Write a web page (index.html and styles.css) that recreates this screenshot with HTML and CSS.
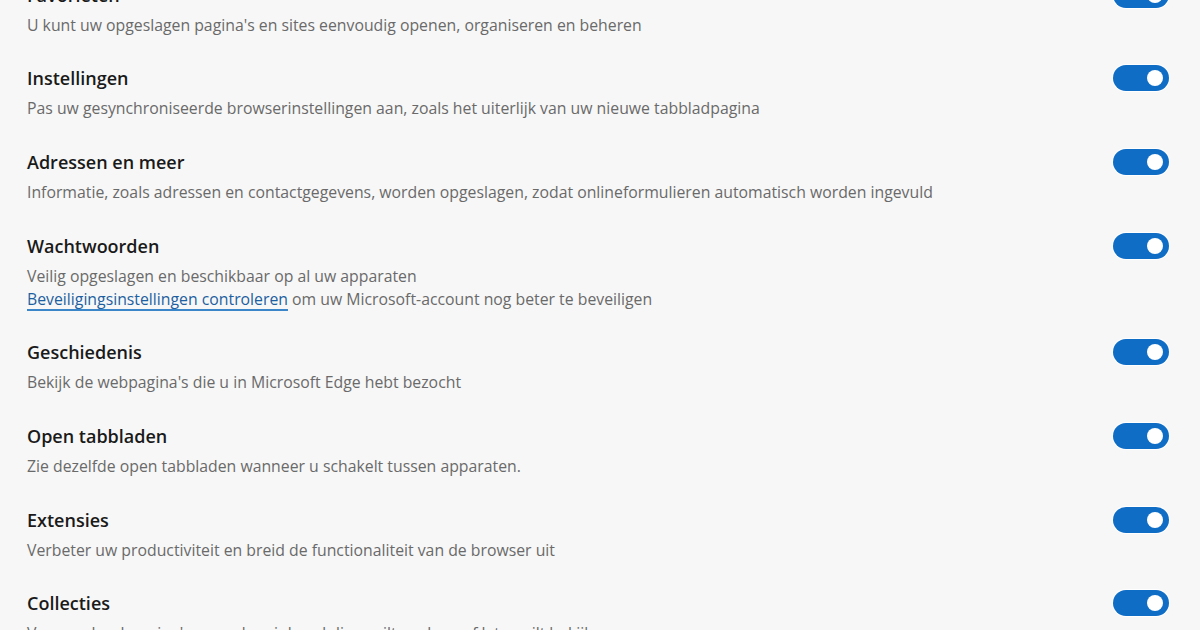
FILE: index.html
```html
<!DOCTYPE html>
<html lang="nl">
<head>
<meta charset="utf-8">
<title>Synchronisatie</title>
<link rel="stylesheet" href="styles.css">
</head>
<body>
<main class="list">
  <section class="row">
    <div class="text">
      <h3 class="title">Favorieten</h3>
      <p class="desc">U kunt uw opgeslagen pagina's en sites eenvoudig openen, organiseren en beheren</p>
    </div>
    <span class="toggle"><span class="knob"></span></span>
  </section>
  <section class="row">
    <div class="text">
      <h3 class="title">Instellingen</h3>
      <p class="desc">Pas uw gesynchroniseerde browserinstellingen aan, zoals het uiterlijk van uw nieuwe tabbladpagina</p>
    </div>
    <span class="toggle"><span class="knob"></span></span>
  </section>
  <section class="row">
    <div class="text">
      <h3 class="title">Adressen en meer</h3>
      <p class="desc">Informatie, zoals adressen en contactgegevens, worden opgeslagen, zodat onlineformulieren automatisch worden ingevuld</p>
    </div>
    <span class="toggle"><span class="knob"></span></span>
  </section>
  <section class="row">
    <div class="text">
      <h3 class="title">Wachtwoorden</h3>
      <p class="desc">Veilig opgeslagen en beschikbaar op al uw apparaten<br><a class="link" href="#">Beveiligingsinstellingen controleren</a> om uw Microsoft-account nog beter te beveiligen</p>
    </div>
    <span class="toggle"><span class="knob"></span></span>
  </section>
  <section class="row">
    <div class="text">
      <h3 class="title">Geschiedenis</h3>
      <p class="desc">Bekijk de webpagina's die u in Microsoft Edge hebt bezocht</p>
    </div>
    <span class="toggle"><span class="knob"></span></span>
  </section>
  <section class="row">
    <div class="text">
      <h3 class="title">Open tabbladen</h3>
      <p class="desc">Zie dezelfde open tabbladen wanneer u schakelt tussen apparaten.</p>
    </div>
    <span class="toggle"><span class="knob"></span></span>
  </section>
  <section class="row">
    <div class="text">
      <h3 class="title">Extensies</h3>
      <p class="desc">Verbeter uw productiviteit en breid de functionaliteit van de browser uit</p>
    </div>
    <span class="toggle"><span class="knob"></span></span>
  </section>
  <section class="row">
    <div class="text">
      <h3 class="title">Collecties</h3>
      <p class="desc">Verzamel webpagina's en andere inhoud die u wilt opslaan of later wilt bekijken</p>
    </div>
    <span class="toggle"><span class="knob"></span></span>
  </section>
</main>
</body>
</html>
```

FILE: styles.css
```css
html, body {
  margin: 0;
  padding: 0;
  background: #f7f7f7;
  overflow: hidden;
  height: 630px;
}

body {
  font-family: "Open Sans", "Noto Sans", "Liberation Sans", sans-serif;
  color: #1b1b1b;
}

.list {
  display: flex;
  flex-direction: column;
  gap: 28.7px;
  margin-top: -18.5px;
  padding: 0 31px 0 27px;
}

.row {
  display: flex;
  align-items: flex-start;
  justify-content: space-between;
}

.text {
  display: flex;
  flex-direction: column;
  gap: 6px;
}

.title {
  margin: 0;
  font-size: 18px;
  line-height: 26px;
  font-weight: 600;
  color: #1a1a1a;
}

.desc {
  margin: 0;
  font-size: 15.8px;
  line-height: 23px;
  color: #6a6a6a;
}

.link {
  color: #1d5fa0;
  text-decoration: underline;
  text-decoration-color: #3b86c8;
  text-decoration-thickness: 2px;
  text-underline-offset: 4px;
}

.toggle {
  flex: none;
  width: 56px;
  height: 26px;
  border-radius: 13px;
  background: #0f6dc6;
  box-shadow: 0 0 0 1px #ffffff;
  display: flex;
  align-items: center;
  justify-content: flex-end;
  padding-right: 6px;
  box-sizing: border-box;
}

.knob {
  width: 16px;
  height: 16px;
  border-radius: 50%;
  background: #ffffff;
}
```
